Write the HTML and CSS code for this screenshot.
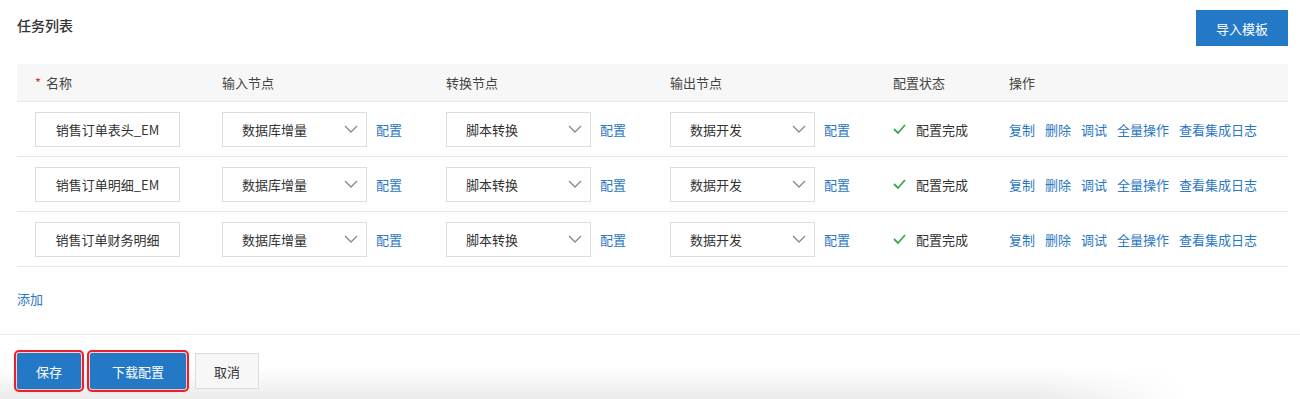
FILE: index.html
```html
<!DOCTYPE html>
<html lang="zh-CN">

<head>
    <meta charset="UTF-8">
    <title>任务列表</title>
    <link rel="stylesheet" href="styles.css">
</head>

<body>
    <div class="panel">
        <div class="panel-head">
            <h3>任务列表</h3>
            <button class="btn primary import">导入模板</button>
        </div>

        <div class="task-table">
            <div class="row head">
                <div class="cell"><span class="req">*</span>名称</div>
                <div class="cell">输入节点</div>
                <div class="cell">转换节点</div>
                <div class="cell">输出节点</div>
                <div class="cell">配置状态</div>
                <div class="cell">操作</div>
            </div>

            <div class="row">
                <div class="cell"><div class="input">销售订单表头_EM</div></div>
                <div class="cell"><div class="select">数据库增量<svg viewBox="0 0 14 8"><path d="M1 1l6 6 6-6"/></svg></div><a class="link">配置</a></div>
                <div class="cell"><div class="select">脚本转换<svg viewBox="0 0 14 8"><path d="M1 1l6 6 6-6"/></svg></div><a class="link">配置</a></div>
                <div class="cell"><div class="select">数据开发<svg viewBox="0 0 14 8"><path d="M1 1l6 6 6-6"/></svg></div><a class="link">配置</a></div>
                <div class="cell status"><svg class="check" viewBox="0 0 13 10"><path d="M1 5l4 4 7-8"/></svg>配置完成</div>
                <div class="cell ops"><a>复制</a><a>删除</a><a>调试</a><a>全量操作</a><a>查看集成日志</a></div>
            </div>

            <div class="row">
                <div class="cell"><div class="input">销售订单明细_EM</div></div>
                <div class="cell"><div class="select">数据库增量<svg viewBox="0 0 14 8"><path d="M1 1l6 6 6-6"/></svg></div><a class="link">配置</a></div>
                <div class="cell"><div class="select">脚本转换<svg viewBox="0 0 14 8"><path d="M1 1l6 6 6-6"/></svg></div><a class="link">配置</a></div>
                <div class="cell"><div class="select">数据开发<svg viewBox="0 0 14 8"><path d="M1 1l6 6 6-6"/></svg></div><a class="link">配置</a></div>
                <div class="cell status"><svg class="check" viewBox="0 0 13 10"><path d="M1 5l4 4 7-8"/></svg>配置完成</div>
                <div class="cell ops"><a>复制</a><a>删除</a><a>调试</a><a>全量操作</a><a>查看集成日志</a></div>
            </div>

            <div class="row">
                <div class="cell"><div class="input">销售订单财务明细</div></div>
                <div class="cell"><div class="select">数据库增量<svg viewBox="0 0 14 8"><path d="M1 1l6 6 6-6"/></svg></div><a class="link">配置</a></div>
                <div class="cell"><div class="select">脚本转换<svg viewBox="0 0 14 8"><path d="M1 1l6 6 6-6"/></svg></div><a class="link">配置</a></div>
                <div class="cell"><div class="select">数据开发<svg viewBox="0 0 14 8"><path d="M1 1l6 6 6-6"/></svg></div><a class="link">配置</a></div>
                <div class="cell status"><svg class="check" viewBox="0 0 13 10"><path d="M1 5l4 4 7-8"/></svg>配置完成</div>
                <div class="cell ops"><a>复制</a><a>删除</a><a>调试</a><a>全量操作</a><a>查看集成日志</a></div>
            </div>
        </div>

        <a class="add">添加</a>
    </div>

    <div class="footer">
        <button class="btn primary marked">保存</button>
        <button class="btn primary marked download">下载配置</button>
        <button class="btn">取消</button>
    </div>
</body>

</html>
```

FILE: styles.css
```css
body {
    margin: 0;
    background: #fff;
    font-family: "Noto Sans CJK SC", "Liberation Sans", sans-serif;
    font-size: 13px;
    color: #333;
    overflow: hidden;
}

a {
    color: #2a77c4;
    cursor: pointer;
}

.panel {
    padding: 10px 12px 0 17px;
}

.panel-head {
    display: flex;
    justify-content: space-between;
    align-items: flex-start;
    height: 54px;
}

.panel-head h3 {
    margin: 5px 0 0;
    font-size: 14px;
    font-weight: 500;
    color: #333;
}

.btn {
    height: 36px;
    padding: 0 18px;
    font-family: inherit;
    font-size: 13px;
    color: #333;
    background: #f7f7f7;
    border: 1px solid #dcdcdc;
    border-radius: 0;
    cursor: pointer;
}

.btn.primary {
    color: #fff;
    background: #2479c6;
    border-color: #2479c6;
}

.btn.import {
    width: 92px;
    padding: 0;
}

.task-table {
    display: flex;
    flex-direction: column;
}

.row {
    display: grid;
    grid-template-columns: 187px 224px 224px 223px 116px 1fr;
    height: 54px;
    border-bottom: 1px solid #e8e8e8;
}

.row.head {
    height: 37px;
    background: #f7f7f7;
    color: #444;
}

.cell {
    display: flex;
    align-items: center;
    padding-left: 18px;
}

.req {
    color: #e0312f;
    margin-right: 5px;
}

.input,
.select {
    box-sizing: border-box;
    width: 145px;
    height: 35px;
    border: 1px solid #dcdcdc;
    display: flex;
    align-items: center;
}

.input {
    justify-content: center;
}

.select {
    padding: 0 8px 0 19px;
    justify-content: space-between;
}

.select svg {
    width: 14px;
    height: 8px;
    fill: none;
    stroke: #888;
    stroke-width: 1.3;
}

.link {
    margin-left: 9px;
}

.status .check {
    width: 13px;
    height: 10px;
    margin-right: 10px;
    fill: none;
    stroke: #3aa94b;
    stroke-width: 1.8;
}

.ops {
    gap: 10px;
}

.add {
    display: block;
    padding: 22px 0 26px;
}

.footer {
    position: relative;
    border-top: 1px solid #e8e8e8;
    padding: 18px 17px 10px;
    display: flex;
    gap: 9px;
    background: linear-gradient(to bottom, #fff 50%, #ebebeb);
}

/* fade the bottom shading out on the right */
.footer::after {
    content: "";
    position: absolute;
    top: 0;
    right: 0;
    bottom: 0;
    width: 260px;
    background: linear-gradient(to right, rgba(255, 255, 255, 0), #fff 55%);
}

.btn.marked {
    position: relative;
    z-index: 1;
    outline: 2px solid #e6222b;
    outline-offset: 1px;
    border-radius: 2px;
    box-shadow: 0 0 3px 2px rgba(230, 34, 43, 0.25);
}

.btn.download {
    padding: 0 21px;
}
```
